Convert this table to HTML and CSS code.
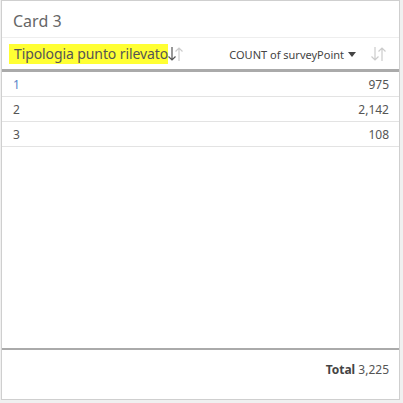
FILE: index.html
```html
<!DOCTYPE html>
<html lang="it">
    <head>
        <meta charset="UTF-8" />
        <title>Card 3</title>
        <link rel="stylesheet" href="styles.css">
    </head>
    <body>
        <div class="card">
            <div class="card-title">Card 3</div>
            <div class="table-head">
                <div class="col-cat">
                    <span class="highlight">Tipologia punto rilevato</span>
                    <svg class="sort" width="16" height="18" viewBox="0 0 16 18">
                        <path d="M4 2v13M0.5 11.5L4 15l3.5-3.5" fill="none" stroke="#555" stroke-width="1.2" />
                        <path d="M11 16V3M7.5 6.5L11 3l3.5 3.5" fill="none" stroke="#ccc" stroke-width="1.2" />
                    </svg>
                </div>
                <div class="col-val">
                    <span class="field">COUNT of surveyPoint</span>
                    <span class="caret"></span>
                    <svg class="sort" width="16" height="18" viewBox="0 0 16 18">
                        <path d="M4 2v13M0.5 11.5L4 15l3.5-3.5" fill="none" stroke="#ccc" stroke-width="1.2" />
                        <path d="M11 16V3M7.5 6.5L11 3l3.5 3.5" fill="none" stroke="#ccc" stroke-width="1.2" />
                    </svg>
                </div>
            </div>
            <div class="table-body">
                <div class="row"><span class="cat first">1</span><span>975</span></div>
                <div class="row"><span class="cat">2</span><span>2,142</span></div>
                <div class="row"><span class="cat">3</span><span>108</span></div>
            </div>
            <div class="table-foot">
                <b>Total</b>&nbsp;3,225
            </div>
        </div>
    </body>
</html>
```
FILE: styles.css
```css
* {
    margin: 0;
    padding: 0;
    box-sizing: border-box;
}
body {
    background-color: #f0f0f0;
    font-family: "Noto Sans", "Open Sans", sans-serif;
    color: #555;
}
.card {
    width: 399px;
    height: 400px;
    margin-left: 1px;
    background-color: #fff;
    border: 1px solid #cfcfcf;
    display: flex;
    flex-direction: column;
}
.card-title {
    height: 37px;
    padding: 9px 0 0 11px;
    font-size: 16px;
    color: #666;
    border-bottom: 1px solid #eee;
}
.table-head {
    height: 34px;
    border-bottom: 3px solid #aaa;
    display: flex;
    align-items: center;
    justify-content: space-between;
    padding: 1px 12px 0 7px;
}
.col-cat,
.col-val {
    display: flex;
    align-items: center;
}
.highlight {
    background-color: #ffff33;
    font-size: 14px;
    line-height: 20px;
    padding: 0 0 0 5px;
    letter-spacing: -0.1px;
    color: #555;
}
.sort {
    display: block;
}
.field {
    font-size: 11px;
    color: #444;
}
.caret {
    width: 0;
    height: 0;
    border-left: 4px solid transparent;
    border-right: 4px solid transparent;
    border-top: 5px solid #444;
    margin: 0 15px 0 4px;
}
.table-body {
    flex: 1;
}
.row {
    height: 25px;
    border-bottom: 1px solid #e3e3e3;
    display: flex;
    justify-content: space-between;
    align-items: center;
    padding: 0 10px 0 11px;
    font-size: 12px;
    color: #555;
}
.row .first {
    color: #5a85c8;
}
.table-foot {
    height: 51px;
    border-top: 2px solid #aaa;
    display: flex;
    justify-content: flex-end;
    align-items: center;
    padding: 0 10px 10px 0;
    font-size: 12px;
    color: #555;
}
.table-foot b {
    color: #444;
}
```
